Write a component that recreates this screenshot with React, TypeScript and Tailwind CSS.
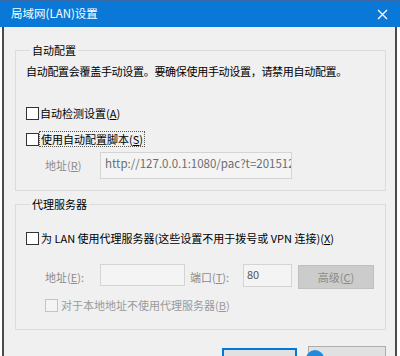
import type { ReactNode } from 'react'

const font = { fontFamily: '"Noto Sans CJK SC", "Noto Sans", sans-serif' }

function Key({ k }: { k: string }) {
  return (
    <>
      (<span className="underline underline-offset-[1px]">{k}</span>)
    </>
  )
}

function Box({ disabled }: { disabled?: boolean }) {
  return (
    <span
      className={
        'inline-block w-[13px] h-[13px] shrink-0 border ' + (disabled ? 'border-[#c4c4c4] bg-[#f4f4f4]' : 'border-[#333] bg-white')
      }
    />
  )
}

function Group({ title, children, className }: { title: string; children: ReactNode; className?: string }) {
  return (
    <div className={'ml-[11px] w-[371px] border border-[#dcdcdc] ' + (className ?? '')}>
      <div className="-mt-[9px] ml-[4px] w-fit px-[2px] bg-[#f0f0f0] leading-[16px]">{title}</div>
      {children}
    </div>
  )
}

export default function App() {
  return (
    <div className="w-[400px] h-[356px] bg-white overflow-hidden relative text-[11px] text-black" style={font}>
      <div className="h-[27px] bg-[#0a78d6] border-t border-[#3a6aa8] flex items-center justify-between pl-[11px] pr-[12px] text-white text-[11.5px]">
        <span>局域网(LAN)设置</span>
        <svg width="11" height="11" viewBox="0 0 11 11">
          <path d="M1 1L10 10M10 1L1 10" stroke="white" strokeWidth="1.3" />
        </svg>
      </div>

      <div className="flex h-[329px]">
        <div className="w-[2px] bg-white" />
        <div className="w-[2px] bg-[#4b4b4b]" />
        <div className="w-[391px] bg-[#f0f0f0] flex flex-col">
          <Group title="自动配置" className="mt-[23px] pl-[10px] pb-[11px]">
            <div className="mt-[5px] leading-[16px] tracking-[-0.3px]">自动配置会覆盖手动设置。要确保使用手动设置，请禁用自动配置。</div>
            <div className="mt-[26px] flex items-center gap-[1px] leading-[16px]">
              <Box />
              <span>
                自动检测设置<Key k="A" />
              </span>
            </div>
            <div className="mt-[10px] flex items-center gap-[0px] leading-[14px]">
              <Box />
              <span className="border border-dotted border-[#555] px-[1px]">
                使用自动配置脚本<Key k="S" />
              </span>
            </div>
            <div className="mt-[5px] flex items-center">
              <span className="ml-[19px] w-[55px] text-[#8c8c8c]">
                地址<Key k="R" />
              </span>
              <div className="w-[192px] h-[27px] border border-[#d4d4d4] bg-[#f4f4f4] pl-[4px] pt-[2px] text-[#6d6d6d] text-[11.5px] overflow-hidden whitespace-nowrap">
                http://127.0.0.1:1080/pac?t=20151231
              </div>
            </div>
          </Group>

          <Group title="代理服务器" className="mt-[13px] pl-[10px] pb-[16px]">
            <div className="mt-[18px] flex items-center gap-[2px] leading-[16px]">
              <Box />
              <span>
                为 LAN 使用代理服务器(这些设置不用于拨号或 VPN 连接)<Key k="X" />
              </span>
            </div>
            <div className="mt-[18px] flex items-start">
              <span className="ml-[19px] w-[55px] mt-[5px] text-[#8c8c8c]">
                地址<Key k="E" />:
              </span>
              <div className="w-[85px] h-[22px] border border-[#d4d4d4] bg-[#f4f4f4]" />
              <span className="ml-[5px] w-[53px] mt-[5px] text-[#8c8c8c]">
                端口<Key k="T" />:
              </span>
              <div className="w-[49px] h-[23px] border border-[#d4d4d4] bg-[#f4f4f4] pl-[3px] pt-[1px] text-[#555]">80</div>
              <div className="ml-[6px] mt-[1px] w-[76px] h-[24px] bg-[#cccccc] border border-[#c0c0c0] flex items-center justify-center text-[#8a8a8a]">
                高级<Key k="C" />
              </div>
            </div>
            <div className="mt-[8px] ml-[19px] flex items-center gap-[3px] leading-[16px] text-[#9a9a9a]">
              <Box disabled />
              <span>
                对于本地地址不使用代理服务器<Key k="B" />
              </span>
            </div>
          </Group>

          <div className="mt-[16px] flex justify-end items-start gap-[11px] pr-[9px]">
            <div className="mt-[2px] w-[75px] h-[24px] border-2 border-[#0078d7] bg-[#e1e1e1]" />
            <div className="w-[78px] h-[24px] border border-[#adadad] bg-[#e1e1e1]" />
          </div>
        </div>
        <div className="w-[2px] bg-[#4b4b4b]" />
        <div className="flex-1 bg-white" />
      </div>

      <div className="absolute left-[306px] top-[350px] w-[18px] h-[18px] rounded-full bg-[#1e8be0]" />
    </div>
  )
}
